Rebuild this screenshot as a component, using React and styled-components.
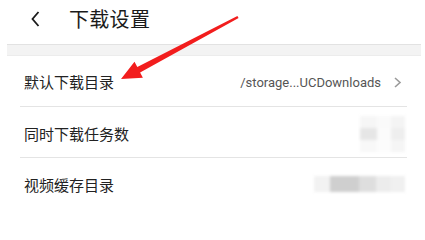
import React from "react";
import styled, { createGlobalStyle } from "styled-components";

const Global = createGlobalStyle`
  html, body { margin: 0; padding: 0; background: #fff; }
  body { font-family: "Noto Sans CJK SC", "Noto Sans", sans-serif; }
`;

const Page = styled.div`
  position: relative;
  width: 425px;
  height: 209px;
  overflow: hidden;
  background: #fff;
`;

const Header = styled.div`
  height: 44px;
  display: flex;
  align-items: center;
  padding-left: 31px;
  gap: 29px;
`;

const Title = styled.div`
  font-size: 20px;
  color: #1a1a1a;
  line-height: 1;
  margin-top: -6px;
  letter-spacing: 0.3px;
`;

const BackIcon = styled.svg`
  width: 9px;
  height: 16px;
  margin-top: -6px;
`;

const Band = styled.div`
  height: 10px;
  margin: 0 4px 0 7px;
  background: #f3f3f3;
  border-top: 1px solid #e2e2e2;
  border-bottom: 1px solid #ececec;
`;

const List = styled.div`
  display: flex;
  flex-direction: column;
`;

const Row = styled.div`
  height: 50px;
  margin: 0 18px 0 20px;
  display: flex;
  align-items: center;
  border-bottom: ${(p) => (p.$last ? "none" : "1px solid #e4e4e4")};
  position: relative;
`;

const Label = styled.div`
  padding-left: 4px;
  font-size: 15px;
  color: #222;
  flex: 1;
  margin-top: ${(p) => p.$dy || 0}px;
`;

const Value = styled.div`
  font-family: Roboto, "Noto Sans", sans-serif;
  font-size: 13px;
  color: #555;
  margin-right: 12px;
  margin-top: 2px;
`;

const Chevron = styled.svg`
  width: 9px;
  height: 11px;
  margin-right: 5px;
  margin-top: 2px;
`;

const Mosaic = styled.div`
  position: absolute;
  right: ${(p) => p.$right}px;
  top: ${(p) => p.$top}px;
  display: grid;
  grid-template-columns: ${(p) => p.$cols};
  grid-auto-rows: ${(p) => p.$rowH}px;
  filter: blur(1.5px);
`;

const Cell = styled.div`
  background: ${(p) => p.$c};
`;

const ArrowSvg = styled.svg`
  position: absolute;
  left: 0;
  top: 0;
  width: 425px;
  height: 209px;
  pointer-events: none;
`;

export default function App() {
  return (
    <Page>
      <Global />
      <Header>
        <BackIcon viewBox="0 0 9 16">
          <polyline points="7.5,1 1.5,8 7.5,15" fill="none" stroke="#1a1a1a" strokeWidth="1.8" />
        </BackIcon>
        <Title>下载设置</Title>
      </Header>
      <Band />
      <List>
        <Row>
          <Label>默认下载目录</Label>
          <Value>/storage...UCDownloads</Value>
          <Chevron viewBox="0 0 9 11">
            <polyline points="2,1 7,5.5 2,10" fill="none" stroke="#9a9a9a" strokeWidth="1.6" />
          </Chevron>
        </Row>
        <Row>
          <Label $dy={2}>同时下载任务数</Label>
          <Mosaic $right={2} $top={9} $cols="17px 14px 14px" $rowH={12}>
            <Cell $c="#f6f6f6" /><Cell $c="#fafafa" /><Cell $c="#f4f4f4" />
            <Cell $c="#e6e6e6" /><Cell $c="#fbfbfb" /><Cell $c="#eeeeee" />
            <Cell $c="#f8f8f8" /><Cell $c="#fcfcfc" /><Cell $c="#f5f5f5" />
          </Mosaic>
        </Row>
        <Row $last>
          <Label $dy={2}>视频缓存目录</Label>
          <Mosaic $right={2} $top={18} $cols="16px 29px 17px 15px 14px" $rowH={16}>
            <Cell $c="#f2f2f2" /><Cell $c="#cfcfcf" /><Cell $c="#dedede" /><Cell $c="#ececec" /><Cell $c="#f0f0f0" />
          </Mosaic>
        </Row>
      </List>
      <ArrowSvg viewBox="0 0 425 209">
        <polygon
          points="121,79 134.5,61.7 137.3,67 237.4,15.9 238.6,18.1 140.1,72.4 142.9,77.7"
          fill="#f21d1d"
        />
      </ArrowSvg>
    </Page>
  );
}
